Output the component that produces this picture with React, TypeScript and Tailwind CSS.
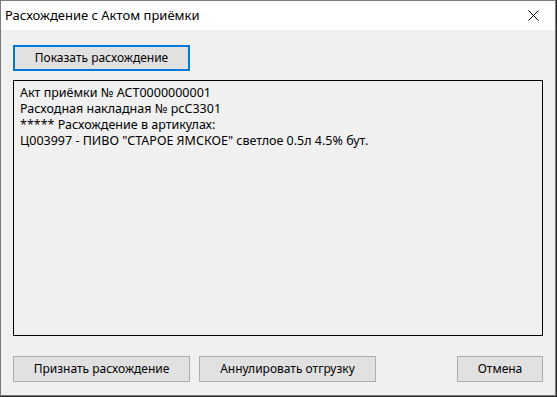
import React from "react";

const font = { fontFamily: '"Noto Sans", "Liberation Sans", sans-serif' };

const Btn = ({ label, className }: { label: string; className: string }) => (
  <button
    type="button"
    className={`h-[26px] bg-[#e1e1e1] border border-[#adadad] text-[12px] text-black leading-none ${className}`}
  >
    {label}
  </button>
);

export default function App() {
  const lines = [
    "Акт приёмки № АСТ0000000001",
    "Расходная накладная № рсС3301",
    "***** Расхождение в артикулах:",
    'Ц003997 - ПИВО "СТАРОЕ ЯМСКОЕ" светлое 0.5л 4.5% бут.',
  ];

  return (
    <div className="w-[557px] h-[397px] bg-[#2b2b2b]" style={font}>
      <div className="w-[556px] h-[396px] border border-[#7a7a7a] flex flex-col bg-[#f0f0f0]">
        <div className="h-[29px] bg-white flex items-center justify-between pl-[4px] pr-[16px]">
          <span className="text-[13px] text-black">Расхождение с Актом приёмки</span>
          <svg width="11" height="11" viewBox="0 0 11 11" className="text-black">
            <path d="M0.5 0.5 L10.5 10.5 M10.5 0.5 L0.5 10.5" stroke="currentColor" strokeWidth="1" />
          </svg>
        </div>

        <div className="flex-1 flex flex-col px-[12px] pt-[15px] pb-[13px]">
          <button
            type="button"
            className="w-[177px] h-[26px] bg-[#e1e1e1] border-2 border-[#0078d7] text-[12px] text-black leading-none"
          >
            Показать расхождение
          </button>

          <div className="mt-[9px] h-[256px] border border-black bg-[#f0f0f0] px-[6px] pt-[4px] text-[12.5px] leading-[16px] text-black">
            {lines.map((l) => (
              <div key={l} className="whitespace-pre">
                {l}
              </div>
            ))}
          </div>

          <div className="mt-auto flex">
            <Btn label="Признать расхождение" className="w-[177px]" />
            <Btn label="Аннулировать отгрузку" className="w-[177px] ml-[9px]" />
            <Btn label="Отмена" className="w-[86px] ml-auto" />
          </div>
        </div>
      </div>
    </div>
  );
}
